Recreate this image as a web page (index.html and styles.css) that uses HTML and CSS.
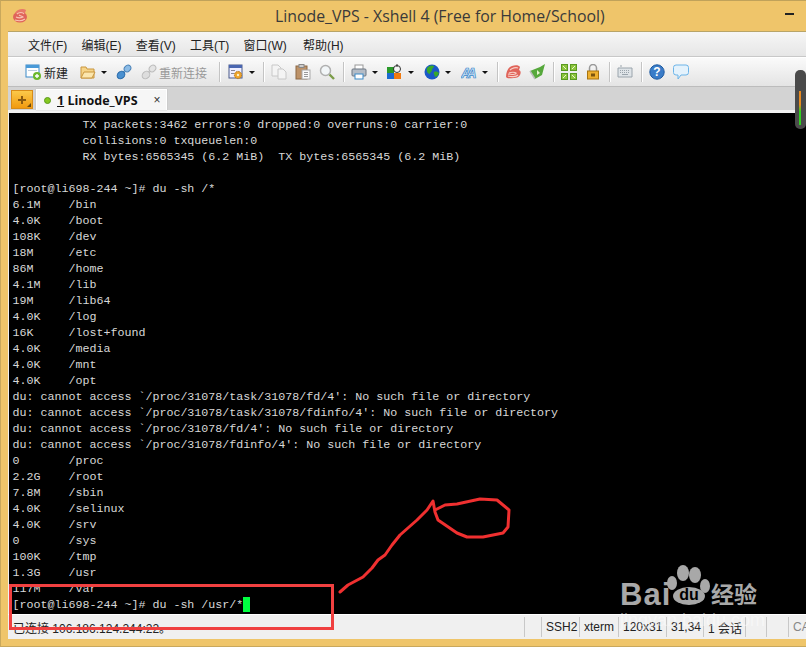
FILE: index.html
```html
<!DOCTYPE html>
<html lang="zh">
<head>
<meta charset="utf-8">
<title>Linode_VPS - Xshell 4</title>
<link rel="stylesheet" href="styles.css">
</head>
<body>
<div class="window">
  <header class="titlebar">
    <svg class="appicon" viewBox="0 0 16 16"><ellipse cx="8" cy="9" rx="7" ry="5.500" fill="#e0645a"/><path d="M3 5c2-4 8-5 11-3l-1 3-8 1z" fill="#e87868"/><path d="M5 6c2-2 6-2 7 0M4 9c2 1 5 1 7 0-1-1-3-1-4-2M3 12c3 1 7 1 10-1" fill="none" stroke="#f8c4b4" stroke-width="1.100"/></svg>
    <span class="title">Linode_VPS - Xshell 4 (Free for Home/School)</span>
    <span class="minimize"></span>
  </header>
  <div class="content">
    <nav class="menubar">
      <span>文件(F)</span><span>编辑(E)</span><span>查看(V)</span><span>工具(T)</span><span>窗口(W)</span><span>帮助(H)</span>
    </nav>
    <div class="toolbar">
      <div class="group g-new">
        <div class="btn btn-new">
          <svg class="ic" viewBox="0 0 16 16"><rect x="1" y="1" width="13" height="12" fill="#fff" stroke="#3b8ac8"/><rect x="1" y="1" width="13" height="3" fill="#4a9ad8"/><rect x="3" y="6" width="9" height="1" fill="#bcd"/><circle cx="12" cy="12" r="4" fill="#6cb82c"/><path d="M12 10v4M10 12h4" stroke="#fff" stroke-width="1.400"/></svg>
          <span class="lbl">新建</span>
        </div>
        <div class="drop">
          <svg class="ic" viewBox="0 0 16 16"><path d="M1 3h5l1 2h7v9H1z" fill="#f6d488" stroke="#c9963e"/><path d="M1 14l3-6h11l-3 6z" fill="#fbe6ae" stroke="#c9963e"/></svg>
          <i class="arrow"></i>
        </div>
        <svg class="ic" viewBox="0 0 16 16"><path d="M2 14l12-12" stroke="#8ab8e0" stroke-width="2"/><ellipse cx="5" cy="11" rx="4.200" ry="3.400" transform="rotate(-45 5 11)" fill="#4a90d0" stroke="#2a6aa8"/><ellipse cx="11.500" cy="4.500" rx="3.600" ry="3" transform="rotate(-45 11.500 4.500)" fill="#8cbce6" stroke="#4a82b8"/></svg>
        <div class="btn off">
          <svg class="ic" viewBox="0 0 16 16"><path d="M2 14l12-12" stroke="#ccc" stroke-width="2"/><ellipse cx="5" cy="11" rx="4.200" ry="3.400" transform="rotate(-45 5 11)" fill="#ddd" stroke="#bbb"/><ellipse cx="11.500" cy="4.500" rx="3.600" ry="3" transform="rotate(-45 11.500 4.500)" fill="#e4e4e4" stroke="#bbb"/></svg>
          <span class="lbl">重新连接</span>
        </div>
      </div>
      <i class="sep"></i>
      <div class="group g-props">
        <div class="drop">
          <svg class="ic" viewBox="0 0 16 16"><rect x="1" y="1" width="13" height="13" fill="#eef" stroke="#4a5a8a"/><rect x="1" y="1" width="13" height="3" fill="#4a66b0"/><rect x="3" y="6" width="4" height="1" fill="#889"/><rect x="3" y="9" width="3" height="1" fill="#889"/><circle cx="10" cy="11" r="3.600" fill="#eda42c" stroke="#b87714" stroke-dasharray="1.600 .8"/><circle cx="10" cy="11" r="1.200" fill="#fff2c8"/></svg>
          <i class="arrow"></i>
        </div>
      </div>
      <i class="sep"></i>
      <div class="group">
        <svg class="ic" viewBox="0 0 16 16"><path d="M1 1h6l3 3v8H1z" fill="#f4f4f4" stroke="#c8c8c8"/><path d="M7 5h5l3 3v7H7z" fill="#f4f4f4" stroke="#c8c8c8"/></svg>
        <svg class="ic" viewBox="0 0 16 16"><rect x="1" y="2" width="11" height="13" fill="#bd9268" stroke="#8c6844"/><rect x="4" y="0.500" width="5" height="3" fill="#ccc" stroke="#888"/><rect x="7" y="6" width="8" height="9" fill="#fafafa" stroke="#aaa"/><path d="M9 8.500h4M9 10.500h4M9 12.500h4" stroke="#999"/></svg>
        <svg class="ic" viewBox="0 0 16 16"><circle cx="6.500" cy="6.500" r="5" fill="#f2f6f8" stroke="#b0b0b0" stroke-width="1.500"/><path d="M10.500 10.500l4.500 4.500" stroke="#7c9c48" stroke-width="2.400"/></svg>
      </div>
      <i class="sep"></i>
      <div class="group g-drops">
        <div class="drop">
          <svg class="ic" viewBox="0 0 16 16"><rect x="4" y="1" width="8" height="5" fill="#fff" stroke="#999"/><rect x="1" y="5" width="14" height="7" rx="1" fill="#b4bcc6" stroke="#6c7682"/><rect x="4" y="10" width="8" height="5" fill="#fff" stroke="#3b8ac8"/></svg>
          <i class="arrow"></i>
        </div>
        <div class="drop">
          <svg class="ic" viewBox="0 0 16 16"><rect x="0" y="3" width="7" height="6" fill="#2a9a2a"/><rect x="0" y="9" width="7" height="6" fill="#1a6ad0"/><rect x="7" y="9" width="7" height="6" fill="#f07a10"/><rect x="7" y="3" width="7" height="6" fill="#f4f4f4"/><circle cx="10" cy="5" r="3.500" fill="none" stroke="#333"/><path d="M10 0v3" stroke="#333"/></svg>
          <i class="arrow"></i>
        </div>
        <div class="drop d-globe">
          <svg class="ic" viewBox="0 0 16 16"><circle cx="8" cy="8" r="7.500" fill="#1a58c8"/><path d="M3 4c2-3 6-3 7-2 0 2-2 2-2 4s-2 2-2 4c-2 0-4-3-3-6zM10 8c2-1 4 0 5 1-1 3-3 4-4 4 0-2-2-3-1-5z" fill="#38a82c"/></svg>
          <i class="arrow"></i>
        </div>
        <div class="drop">
          <svg class="ic" viewBox="0 0 16 16"><text x="0" y="14" class="aa">A</text><text x="5.500" y="14" class="aa">A</text></svg>
          <i class="arrow"></i>
        </div>
      </div>
      <i class="sep"></i>
      <div class="group">
        <svg class="ic" viewBox="0 0 16 16"><path d="M1 13C1 8 3 3 7 2c3-1 7-1 8 1l-1 3c2 1 2 3 1 5s-3 3-6 3-7 1-8-1z" fill="#e0645a"/><path d="M5 6c2-2 6-3 8-2M4 9c2-1 6-1 7 0s-3 2-8 1M3 12c3 1 8 1 10-1" fill="none" stroke="#f8d0c8" stroke-width="1.100"/></svg>
        <svg class="ic" viewBox="0 0 16 16"><path d="M1 7l10-4 5-3-3 11-7 4z" fill="#56a83c"/><path d="M1 7l5 8" stroke="#bbb" stroke-width="1.500"/><path d="M8 6l3 3-3 2z" fill="#e6f6d0"/></svg>
      </div>
      <i class="sep"></i>
      <div class="group g-lock">
        <svg class="ic" viewBox="0 0 16 16"><rect x="0.500" y="0.500" width="6" height="6" fill="#8cc43c" stroke="#5a9a20"/><rect x="9.500" y="0.500" width="6" height="6" fill="#8cc43c" stroke="#5a9a20"/><rect x="0.500" y="9.500" width="6" height="6" fill="#8cc43c" stroke="#5a9a20"/><rect x="9.500" y="9.500" width="6" height="6" fill="#8cc43c" stroke="#5a9a20"/><path d="M2 2l3 3M14 2l-3 3M2 14l3-3M14 14l-3-3" stroke="#e8f6d0"/></svg>
        <svg class="ic lock" viewBox="0 0 12 16"><path d="M2.500 7V4a3.500 3.500 0 0 1 7 0v3" fill="none" stroke="#999" stroke-width="1.500"/><rect x="0.500" y="7" width="11" height="8" fill="#eeb030" stroke="#a87410"/><rect x="4" y="9.500" width="4" height="3" fill="#7a5410"/></svg>
      </div>
      <i class="sep"></i>
      <svg class="ic" viewBox="0 0 16 16"><path d="M4 3V1M1 4h14v9H1z" fill="#dfe4e8" stroke="#9aa4ac"/><path d="M3 6.500h10M3 8.500h10" stroke="#9aa4ac" stroke-dasharray="1 1"/><path d="M5 10.500h6" stroke="#9aa4ac"/></svg>
      <i class="sep"></i>
      <div class="group">
        <svg class="ic" viewBox="0 0 16 16"><circle cx="8" cy="8" r="7.200" fill="#3a7cc8" stroke="#1e5aa0"/><text x="8" y="12" class="qmark">?</text></svg>
        <svg class="ic" viewBox="0 0 16 16"><path d="M3 1h10a2.500 2.500 0 0 1 2.500 2.500v5A2.500 2.500 0 0 1 13 11H8l-3 4v-4H3A2.500 2.500 0 0 1 .5 8.500v-5A2.500 2.500 0 0 1 3 1z" fill="#e4f2fc" stroke="#6cb4e8"/></svg>
      </div>
    </div>
    <div class="tabstrip">
      <div class="plus"><span class="plus-mark"></span><i class="corner"></i></div>
      <div class="tab">
        <i class="dot"></i>
        <span class="tabname"><u>1</u> Linode_VPS</span>
        <span class="close">×</span>
      </div>
    </div>
    <pre class="terminal">          TX packets:3462 errors:0 dropped:0 overruns:0 carrier:0
          collisions:0 txqueuelen:0
          RX bytes:6565345 (6.2 MiB)  TX bytes:6565345 (6.2 MiB)

[root@li698-244 ~]# du -sh /*
6.1M    /bin
4.0K    /boot
108K    /dev
18M     /etc
86M     /home
4.1M    /lib
19M     /lib64
4.0K    /log
16K     /lost+found
4.0K    /media
4.0K    /mnt
4.0K    /opt
du: cannot access `/proc/31078/task/31078/fd/4': No such file or directory
du: cannot access `/proc/31078/task/31078/fdinfo/4': No such file or directory
du: cannot access `/proc/31078/fd/4': No such file or directory
du: cannot access `/proc/31078/fdinfo/4': No such file or directory
0       /proc
2.2G    /root
7.8M    /sbin
4.0K    /selinux
4.0K    /srv
0       /sys
100K    /tmp
1.3G    /usr
117M    /var
[root@li698-244 ~]# du -sh /usr/*<span class="cursor"> </span></pre>
    <footer class="status">
      <span class="s-main">已连接 106.186.124.244:22。</span>
      <span class="s-cell w17"></span>
      <span class="s-cell w38">SSH2</span>
      <span class="s-cell w39">xterm</span>
      <span class="s-cell w48">120x31</span>
      <span class="s-cell w37">31,34</span>
      <span class="s-cell w42">1 会话</span>
      <span class="s-cell w21"></span>
      <span class="s-cell w22"></span>
      <span class="s-cell caps">CA</span>
    </footer>
  </div>
</div>
<div class="meter"><i class="meter-fill"></i></div>
<svg class="ink" viewBox="0 0 806 647">
  <rect x="10.500" y="585.500" width="322" height="43" class="ink-box"/>
  <path class="ink-line" d="M340 592L348 585L363 577L372 568L378 560L385 555L392 545L400 535L417 520L427 510L433 501L435 512L438 520L457 533L467 537L483 537L503 533L508 527L509 510L497 500L480 499L457 504L445 505L435 510"/>
</svg>
<div class="mark">
  <svg class="paw" viewBox="0 0 44 44"><ellipse cx="5" cy="25" rx="5" ry="7"/><ellipse cx="16" cy="15" rx="6" ry="8"/><ellipse cx="28" cy="17" rx="6" ry="8"/><ellipse cx="38" cy="28" rx="5" ry="7"/></svg>
  <span class="mark-bai">Bai</span><span class="mark-du">du</span><span class="mark-cn">经验</span>
  <span class="mark-url">jingyan.baidu.com</span>
</div>
</body>
</html>
```
FILE: styles.css
```css
* { box-sizing: border-box; }
html, body { margin: 0; height: 100%; overflow: hidden; background: #efc56a; }
body { width: 806px; height: 647px; position: relative; font-family: "Liberation Sans", "Noto Sans CJK SC", sans-serif; font-size: 12px; color: #222; }
.window { height: 647px; display: flex; flex-direction: column; border-top: 1px solid #c0a25a; border-left: 1px solid #c9a85c; border-bottom: 1px solid #c9a85c; }
.titlebar { height: 30px; flex: none; display: flex; align-items: center; position: relative; padding-left: 11px; }
.appicon { width: 16px; height: 16px; flex: none; }
.title { margin-left: 247px; font: 15.85px "Open Sans", "Liberation Sans", sans-serif; color: #3a3a3a; white-space: nowrap; }
.minimize { position: absolute; left: 784px; top: 12px; width: 9px; height: 2px; background: #222; }
.content { margin-left: 7px; height: 608px; flex: none; display: flex; flex-direction: column; background: #f0f0f0; border-top: 1px solid #b8a468; }
.menubar { height: 25px; flex: none; display: flex; gap: 14.2px; align-items: center; padding-left: 20px; background: linear-gradient(#f6f6f6, #e6e6e6); border-bottom: 1px solid #c8c8c8; }
.menubar span { white-space: nowrap; }
.menubar span:last-child { margin-left: 2px; }
.toolbar { height: 30px; flex: none; display: flex; align-items: center; padding-left: 17px; background: linear-gradient(#fafafa, #e4e4e4); border-bottom: 1px solid #bcbcbc; border-top: 1px solid #fff; }
.group { display: flex; align-items: center; gap: 8px; }
.g-new { gap: 9px; margin-right: 4px; }
.btn-new { margin-right: 3px; }
.g-props { margin-left: 1px; }
.g-drops { gap: 9px; margin-right: 1px; }
.d-globe { margin: 0 1px; }
.g-lock { gap: 8px; }
.btn, .drop { display: flex; align-items: center; }
.btn { gap: 2px; }
.btn-new { gap: 3px; }
.drop { gap: 5px; }
.btn.off { color: #999; }
.ic { width: 16px; height: 16px; flex: none; display: block; }
.ic.lock { width: 12px; margin: 0 2px; }
.arrow { width: 0; height: 0; border: 3px solid transparent; border-top: 3px solid #111; border-bottom: 0; flex: none; }
.sep { width: 1px; height: 20px; margin: 0 7px 0 8px; background: #c4c4c4; box-shadow: 1px 0 #fff; flex: none; }
.lbl { white-space: nowrap; }
.qmark { font: bold 12px "Liberation Sans", sans-serif; fill: #fff; text-anchor: middle; }
.aa { font: italic bold 14px "Liberation Sans", sans-serif; fill: #cfe6fa; stroke: #3b86c8; stroke-width: .7; }
.tabstrip { height: 26px; flex: none; display: flex; align-items: flex-end; gap: 3px; padding-left: 3px; background: #d3d3d3; border-bottom: 3px solid #f2f2f2; }
.plus { width: 22px; height: 19px; position: relative; margin-bottom: 1px; background: linear-gradient(#fbc94a, #f19a10); border: 1px solid #d88c18; display: flex; align-items: center; justify-content: center; }
.plus-mark { width: 8px; height: 8px; background: linear-gradient(#8a5a10, #8a5a10) center / 8px 2px no-repeat, linear-gradient(#8a5a10, #8a5a10) center / 2px 8px no-repeat; }
.corner { position: absolute; right: 1px; bottom: 1px; border: 2px solid transparent; border-right-color: #6a4a10; border-bottom-color: #6a4a10; }
.tab { width: 131px; height: 21px; display: flex; align-items: center; padding-left: 7px; background: #f6f6f6; border: 1px solid #fff; border-bottom: 0; box-shadow: 0 0 1px #aaa; }
.dot { width: 7px; height: 7px; border-radius: 50%; background: #84c820; border: 1px solid #5a9a1a; flex: none; }
.tabname { margin-left: 6px; font: bold 12.5px "Open Sans", "Liberation Sans", sans-serif; white-space: nowrap; color: #111; }
.close { margin-left: 16px; font-size: 12px; color: #333; }
.terminal { height: 501px; flex: none; margin: 0 0 0 1px; padding: 4px 0 0 3.5px; background: #000; color: #d8d8d8; font: 11.67px/16px "Liberation Mono", monospace; overflow: hidden; }
.cursor { display: inline-block; width: 7px; height: 15px; vertical-align: top; background: #00ff40; }
.status { height: 25px; flex: none; display: flex; align-items: center; background: #f0f0f0; border-top: 1px solid #fff; }
.s-main { width: 516px; padding-left: 5px; flex: none; white-space: nowrap; }
.s-cell { height: 20px; flex: none; border-left: 1px solid #c8c8c8; display: flex; align-items: center; padding-left: 4px; white-space: nowrap; overflow: hidden; }
.w17 { width: 17px; }
.w38 { width: 38px; }
.w39 { width: 39px; }
.w48 { width: 48px; }
.w37 { width: 37px; }
.w42 { width: 42px; }
.w21 { width: 21px; }
.w22 { width: 22px; }
.caps { flex: 1; color: #888; }
.meter { position: absolute; left: 795px; top: 70px; width: 11px; height: 59px; border-radius: 5px; background: #4a4a4a; }
.meter-fill { position: absolute; left: 4px; top: 21px; width: 2px; height: 34px; background: linear-gradient(#e88a20 40%, #30d020 60%); }
.ink { position: absolute; left: 0; top: 0; width: 806px; height: 647px; pointer-events: none; }
.ink-box { fill: none; stroke: #f04040; stroke-width: 3; }
.ink-line { fill: none; stroke: #f03030; stroke-width: 3; stroke-linejoin: round; stroke-linecap: round; }
.mark { position: absolute; left: 610px; top: 555px; width: 160px; height: 85px; color: #a8a8a8; }
.paw { position: absolute; left: 57px; top: 3px; width: 44px; height: 44px; fill: #a8a8a8; }
.mark-bai { position: absolute; left: 10px; top: 24px; font: bold 31px/1 "Liberation Sans", sans-serif; letter-spacing: 1px; }
.mark-du { position: absolute; left: 63px; top: 32px; width: 32px; height: 18px; border-radius: 50%; background: #a8a8a8; color: #000; font: bold 16px/16px "Liberation Sans", sans-serif; text-align: center; }
.mark-cn { position: absolute; left: 101px; top: 22px; font: bold 23px/32px "Noto Sans CJK SC", sans-serif; white-space: nowrap; }
.mark-url { position: absolute; left: 10px; top: 55px; font: 18px/20px "Liberation Sans", sans-serif; color: rgba(255,255,255,.45); white-space: nowrap; }
```
